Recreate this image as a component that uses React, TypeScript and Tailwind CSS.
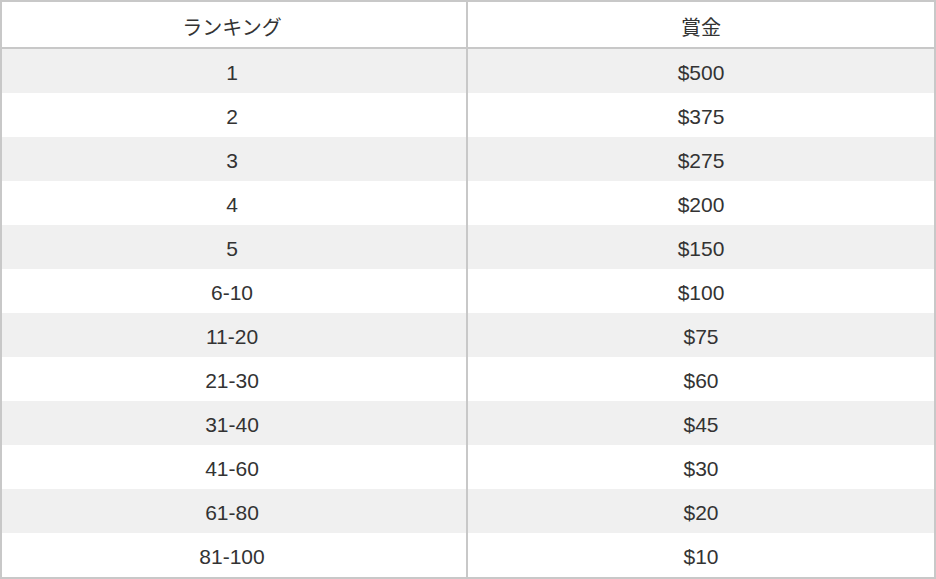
import React from 'react';

const rows: [string, string][] = [
  ['1', '$500'],
  ['2', '$375'],
  ['3', '$275'],
  ['4', '$200'],
  ['5', '$150'],
  ['6-10', '$100'],
  ['11-20', '$75'],
  ['21-30', '$60'],
  ['31-40', '$45'],
  ['41-60', '$30'],
  ['61-80', '$20'],
  ['81-100', '$10'],
];

export default function App() {
  return (
    <div className="w-[936px] h-[579px] bg-white text-[#333] font-['Liberation_Sans','Noto_Sans_CJK_JP',sans-serif]">
      <div className="border-2 border-[#c8c8c8]">
        {/* Header */}
        <div className="grid grid-cols-2 h-[47px] border-b-2 border-[#c8c8c8] text-[20px]">
          <div className="flex items-center justify-center pt-[6px] pr-[4px] border-r-2 border-[#c8c8c8]">
            ランキング
          </div>
          <div className="flex items-center justify-center pt-[6px]">賞金</div>
        </div>

        {rows.map(([rank, prize], i) => (
          <div
            key={rank}
            className={`grid grid-cols-2 h-[44px] text-[21px] ${i % 2 === 0 ? 'bg-[#f0f0f0]' : 'bg-white'}`}
          >
            <div className="flex items-center justify-center pt-[3px] pr-[4px] border-r-2 border-[#c8c8c8]">{rank}</div>
            <div className="flex items-center justify-center pt-[3px]">{prize}</div>
          </div>
        ))}
      </div>
    </div>
  );
}
